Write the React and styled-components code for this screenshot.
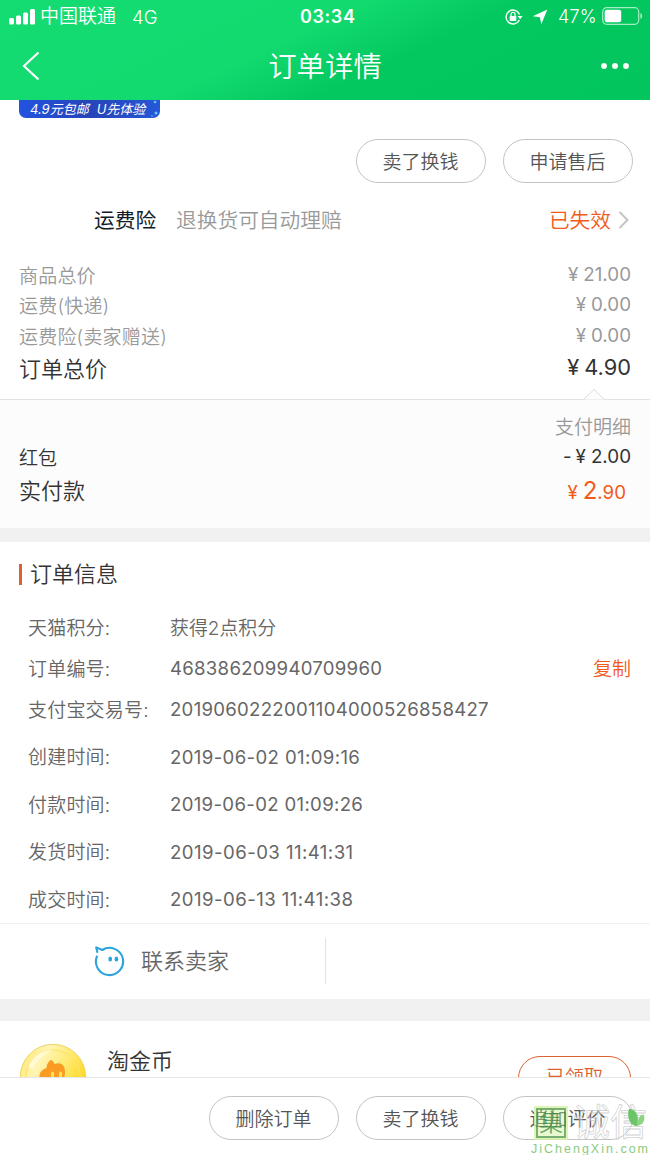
import React from "react";
import styled, { createGlobalStyle } from "styled-components";

const costs = [
    { label: "商品总价", price: "21.00", height: 31 },
    { label: "运费(快递)", price: "0.00", height: 30 },
    { label: "运费险(卖家赠送)", price: "0.00", height: 31 },
];

const infos = [
    { label: "天猫积分:", value: "获得2点积分", height: 41, spacing: 0, cjk: true },
    { label: "订单编号:", value: "468386209940709960", height: 41, spacing: 0.27, copy: true },
    { label: "支付宝交易号:", value: "2019060222001104000526858427", height: 41, spacing: 0.28 },
    { label: "创建时间:", value: "2019-06-02 01:09:16", height: 54, spacing: 0.37 },
    { label: "付款时间:", value: "2019-06-02 01:09:26", height: 41, spacing: 0.33 },
    { label: "发货时间:", value: "2019-06-03 11:41:31", height: 54, spacing: 0.45 },
    { label: "成交时间:", value: "2019-06-13 11:41:38", height: 41, spacing: 0.45 },
];

const StatusBar = () => (
    <Status>
        <SignalIcon width="27" height="16" viewBox="0 0 27 16" fill="#fff">
            <rect x="0" y="9" width="5" height="6.5" rx="1.5" />
            <rect x="7" y="6.5" width="5" height="9" rx="1.5" />
            <rect x="14" y="3.5" width="5" height="12" rx="1.5" />
            <rect x="21" y="0" width="5" height="15.5" rx="1.5" />
        </SignalIcon>
        <Carrier>中国联通</Carrier>
        <Network>4G</Network>
        <Clock>03:34</Clock>
        <svg width="18" height="16" viewBox="0 0 18 16" fill="none" stroke="#fff" strokeWidth="1.4">
            <path d="M14.6 5.5A7 7 0 1 0 14.4 11" />
            <path d="M12.6 7h5l-2.5 3.2z" fill="#fff" stroke="none" />
            <rect x="4.7" y="7" width="6.6" height="5" rx="0.6" fill="#fff" stroke="none" />
            <path d="M6 7V5.4a2 2 0 0 1 4 0V7" strokeWidth="1.2" />
        </svg>
        <LocationIcon width="16" height="16" viewBox="0 0 16 16" fill="#fff">
            <path d="M15.4 0.6 9.3 15.2 7.9 8.3 0.8 7.2z" />
        </LocationIcon>
        <Percent>47%</Percent>
        <BatteryIcon width="41" height="18" viewBox="0 0 41 18">
            <rect x="0.7" y="0.7" width="36" height="16.6" rx="4" fill="none" stroke="#a5edc4" strokeWidth="1.2" />
            <rect x="2.7" y="2.7" width="16.5" height="12.6" rx="2" fill="#fff" />
            <path d="M38.4 6v6c2.4-1 2.4-5 0-6z" fill="#a5edc4" />
        </BatteryIcon>
    </Status>
);

const CostRow = ({ label, price, height }) => (
    <Cost $height={height}>
        <CostLabel>{label}</CostLabel>
        <Price>
            <Yen>¥</Yen>
            {price}
        </Price>
    </Cost>
);

const InfoRow = ({ label, value, height, spacing, copy, cjk }) => (
    <Info $height={height}>
        <InfoLabel>{label}</InfoLabel>
        <InfoValue $cjk={cjk} $spacing={spacing}>
            {value}
        </InfoValue>
        {copy && <Copy>复制</Copy>}
    </Info>
);

const App = () => {
    return (
        <Page>
            <GlobalStyle />
            <Header>
                <StatusBar />
                <Nav>
                    <svg width="18" height="30" viewBox="0 0 18 30" fill="none" stroke="#fff" strokeWidth="2.2">
                        <path d="M16.5 1.5 2 15l14.5 13.5" />
                    </svg>
                    <NavTitle>订单详情</NavTitle>
                    <svg width="28" height="6" viewBox="0 0 28 6" fill="#fff">
                        <circle cx="3" cy="3" r="2.9" />
                        <circle cx="14" cy="3" r="2.9" />
                        <circle cx="25" cy="3" r="2.9" />
                    </svg>
                </Nav>
            </Header>

            <Goods>
                <Banner>
                    <span>4.9元包邮</span>
                    <span>U先体验</span>
                    <Sparkle width="8" height="18" viewBox="0 0 8 18" fill="#5fc4ff">
                        <circle cx="4" cy="2" r="1.3" />
                        <circle cx="5" cy="13" r="1.5" />
                        <circle cx="1" cy="16" r="0.8" />
                    </Sparkle>
                </Banner>
                <Actions>
                    <Pill>卖了换钱</Pill>
                    <Pill>申请售后</Pill>
                </Actions>
            </Goods>

            <Insurance>
                <InsuranceName>运费险</InsuranceName>
                <InsuranceDesc>退换货可自动理赔</InsuranceDesc>
                <Expired>已失效</Expired>
                <ArrowIcon width="12" height="20" viewBox="0 0 12 20" fill="none" stroke="#c4c4c4" strokeWidth="2">
                    <path d="M1.5 2 9.5 10l-8 8" />
                </ArrowIcon>
            </Insurance>

            <Costs>
                {costs.map((c) => (
                    <CostRow key={c.label} {...c} />
                ))}
                <Total>
                    <span>订单总价</span>
                    <TotalPrice>
                        <Yen>¥</Yen>
                        4.90
                    </TotalPrice>
                </Total>
            </Costs>

            <Payment>
                <Notch width="22" height="12" viewBox="0 0 22 12">
                    <path d="M1 11.5 11 1.5l10 10z" fill="#fcfcfc" />
                    <path d="M1 11 11 1.5l10 9.5" fill="none" stroke="#dcdcdc" />
                </Notch>
                <PayDetail>支付明细</PayDetail>
                <RedPacket>
                    <span>红包</span>
                    <Price>
                        <Minus>-</Minus>
                        <Yen>¥</Yen>
                        2.00
                    </Price>
                </RedPacket>
                <Paid>
                    <span>实付款</span>
                    <PaidPrice>
                        <Yen>¥</Yen>
                        <PaidBig>2</PaidBig>.90
                    </PaidPrice>
                </Paid>
            </Payment>
            <Divider $height={14} />

            <OrderInfo>
                <SectionTitle>订单信息</SectionTitle>
                {infos.map((i) => (
                    <InfoRow key={i.label} {...i} />
                ))}
            </OrderInfo>

            <Contact>
                <ContactSeller>
                    <svg width="32" height="32" viewBox="0 0 32 32" fill="none" stroke="#2ba3dc" strokeWidth="2.1" strokeLinejoin="round">
                        <path d="M3.2 10.7A13.6 13.6 0 1 0 8.2 5L2.2 2.4l1.3 5.4" />
                        <ellipse cx="16.2" cy="14" rx="1.9" ry="2.5" fill="#2ba3dc" stroke="none" />
                        <ellipse cx="22.4" cy="14" rx="1.9" ry="2.5" fill="#2ba3dc" stroke="none" />
                    </svg>
                    <span>联系卖家</span>
                </ContactSeller>
            </Contact>
            <Divider $height={22} />

            <CoinSection>
                <Coin width="68" height="68" viewBox="0 0 68 68">
                    <defs>
                        <linearGradient id="coin" x1="0" y1="0" x2="1" y2="0.5">
                            <stop offset="0" stopColor="#ffe35a" />
                            <stop offset="0.35" stopColor="#fff5b4" />
                            <stop offset="0.7" stopColor="#ffe96c" />
                            <stop offset="1" stopColor="#ffd822" />
                        </linearGradient>
                    </defs>
                    <circle cx="34" cy="34" r="32.7" fill="url(#coin)" stroke="#ecd468" />
                    <circle cx="34" cy="34" r="27" fill="none" stroke="#fbe272" strokeWidth="1.2" />
                    <path d="M9 24C14 12 24 7 33 7c-9 5-16 11-19 20z" fill="#fffad2" />
                    <path d="M20.5 34c0-5 2-7 7-9 0-3 1-5 4-8 2 0 3 2 4 4 3-1 5-1 7 0 4 3 4 8 3 13z" fill="#fa9c22" />
                    <path d="M32 34v-4q2-3 3 0v4zM40 34v-4q2-3 3 0v4z" fill="#ffe256" />
                </Coin>
                <CoinTitle>淘金币</CoinTitle>
                <Received>已领取</Received>
            </CoinSection>

            <Footer>
                <Pill>删除订单</Pill>
                <Pill>卖了换钱</Pill>
                <Pill>追加评价</Pill>
                <Watermark>
                    <WatermarkTop>
                        <WatermarkSeal>集</WatermarkSeal>
                        <WatermarkName>诚信</WatermarkName>
                        <Leaf width="20" height="30" viewBox="0 0 20 30">
                            <path d="M2 2c6 0 10 5 9 11 2-5 4-6 6-5 2 7-3 11-8 11C2 18 0 9 2 2z" fill="#8fd480" />
                            <path d="M2 2c6 0 9 5 8 17C2 18 0 9 2 2z" fill="#6cc468" />
                        </Leaf>
                    </WatermarkTop>
                    <WatermarkUrl>JiChengXin.com</WatermarkUrl>
                </Watermark>
            </Footer>
        </Page>
    );
};

const GlobalStyle = createGlobalStyle`
    body {
        margin: 0;
        background: #fff;
    }

    * {
        box-sizing: border-box;
    }

    svg {
        display: block;
        flex: none;
    }
`;

const Page = styled.div`
    width: 650px;
    height: 1155px;
    overflow: hidden;
    background: #fff;
    font-family: Inter, "Noto Sans CJK SC", sans-serif;
    font-weight: 350;
    font-size: 18.7px;
    line-height: 30px;
    color: #666;
    white-space: nowrap;
`;

const Header = styled.header`
    height: 100px;
    color: #fff;
    background: linear-gradient(155deg, #14dc72 0%, #12da6f 43%, #03c75f 61%, #02c55d 100%);
`;

const Status = styled.div`
    display: flex;
    align-items: center;
    height: 33px;
    padding-left: 9px;
`;

const SignalIcon = styled.svg`
    margin-right: 4px;
`;

const Carrier = styled.span`
    width: 92px;
    padding-top: 1px;
    font-size: 19px;
`;

const Network = styled.span`
    width: 168px;
    font-size: 18.5px;
`;

const Clock = styled.span`
    width: 205px;
    font-size: 18px;
    font-weight: 600;
    letter-spacing: 0.6px;
`;

const LocationIcon = styled.svg`
    margin-left: 9px;
`;

const Percent = styled.span`
    width: 44px;
    margin-left: 10px;
    font-size: 18px;
    letter-spacing: 0.2px;
`;

const BatteryIcon = styled.svg`
    margin-top: -1px;
`;

const Nav = styled.div`
    display: flex;
    align-items: center;
    justify-content: space-between;
    height: 66px;
    padding: 0 21px 0 22px;
`;

const NavTitle = styled.h1`
    margin: 2px 0 0 9px;
    font-size: 28.4px;
    font-weight: 350;
    line-height: 40px;
`;

const Goods = styled.section`
    height: 83px;
`;

const Banner = styled.div`
    position: relative;
    display: flex;
    gap: 8px;
    width: 141px;
    height: 18px;
    margin-left: 19px;
    padding-left: 11px;
    border-radius: 0 0 7px 7px;
    background: linear-gradient(90deg, #2253e0, #2744b8 50%, #2458d8);
    color: #fff;
    font-size: 13px;
    font-style: italic;
    font-weight: 400;
    line-height: 19px;
`;

const Sparkle = styled.svg`
    position: absolute;
    right: 1px;
    top: 0;
`;

const Actions = styled.div`
    display: flex;
    justify-content: flex-end;
    gap: 17px;
    padding: 21px 17px 0 0;
`;

const Pill = styled.button`
    width: 130px;
    height: 44px;
    padding: 3px 1px 0 0;
    border: 1px solid #c4c4c4;
    border-radius: 22px;
    background: #fff;
    color: #555;
    font: inherit;
    font-size: 19px;
`;

const Insurance = styled.section`
    display: flex;
    align-items: center;
    height: 74px;
    padding: 2px 20px 0 94px;
    font-size: 20.7px;
`;

const InsuranceName = styled.span`
    color: #111c28;
    font-weight: 400;
`;

const InsuranceDesc = styled.span`
    margin-left: 20px;
    color: #999;
`;

const Expired = styled.span`
    margin-left: auto;
    margin-right: 7px;
    color: #f25a1b;
`;

const ArrowIcon = styled.svg`
    margin-top: -2px;
`;

const Costs = styled.section`
    height: 142px;
    padding: 4px 19px 0;
`;

const Cost = styled.div`
    display: flex;
    align-items: center;
    justify-content: space-between;
    height: ${(props) => props.$height}px;
    color: #999;
    font-size: 19px;
`;

const CostLabel = styled.span`
    letter-spacing: 0.2px;
`;

const Price = styled.span`
    margin-top: -4px;
    font-size: 18.8px;
    font-weight: 400;
`;

const Yen = styled.span`
    margin-right: 5px;
`;

const Total = styled(Cost).attrs({ $height: 32 })`
    color: #333;
    font-size: 22px;
`;

const TotalPrice = styled(Price)`
    font-size: 21.8px;
`;

const Payment = styled.section`
    position: relative;
    height: 129px;
    padding: 13px 19px 0;
    border-top: 1px solid #e2e2e2;
    background: #fcfcfc;
`;

const Notch = styled.svg`
    position: absolute;
    top: -12px;
    right: 45px;
`;

const PayDetail = styled.div`
    color: #999;
    font-size: 19px;
    text-align: right;
`;

const RedPacket = styled(Cost).attrs({ $height: 31 })`
    color: #333;
`;

const Minus = styled.span`
    margin-right: 4px;
`;

const Paid = styled(Cost).attrs({ $height: 33 })`
    color: #333;
    font-size: 22px;
`;

const PaidPrice = styled.span`
    margin-top: 2px;
    margin-right: 5px;
    color: #f25a1b;
    font-size: 18.7px;
    font-weight: 400;
`;

const PaidBig = styled.span`
    font-size: 24px;
`;

const Divider = styled.div`
    height: ${(props) => props.$height}px;
    background: #f1f1f1;
`;

const OrderInfo = styled.section`
    height: 382px;
    padding: 16px 19px 0;
    border-bottom: 1px solid #f0f0f0;
`;

const SectionTitle = styled.h2`
    display: flex;
    align-items: center;
    height: 32px;
    margin: 0 0 18px;
    color: #333;
    font-size: 22px;
    font-weight: 350;

    &::before {
        content: "";
        width: 3px;
        height: 21px;
        margin-right: 8px;
        background: #dc6230;
    }
`;

const Info = styled.div`
    display: flex;
    align-items: center;
    height: ${(props) => props.$height}px;
    padding-left: 9px;
    font-size: 19px;
`;

const InfoLabel = styled.span`
    width: 142px;
    letter-spacing: 0.2px;
`;

const InfoValue = styled.span`
    margin-top: ${(props) => (props.$cjk ? "0" : "-3px")};
    font-size: ${(props) => (props.$cjk ? "18.9px" : "18.6px")};
    font-weight: ${(props) => (props.$cjk ? 350 : 400)};
    letter-spacing: ${(props) => props.$spacing}px;
`;

const Copy = styled.span`
    margin-left: auto;
    color: #f25a1b;
`;

const Contact = styled.section`
    display: flex;
    align-items: center;
    height: 75px;
    padding-bottom: 1px;
`;

const ContactSeller = styled.div`
    display: flex;
    align-items: center;
    gap: 15px;
    width: 326px;
    height: 46px;
    padding-left: 94px;
    border-right: 1px solid #e2e2e2;
    font-size: 22px;
`;

const CoinSection = styled.section`
    display: flex;
    align-items: flex-start;
    height: 56px;
    padding: 0 19px;
    overflow: hidden;
`;

const Coin = styled.svg`
    margin-top: 22px;
`;

const CoinTitle = styled.span`
    margin: 24px 0 0 20px;
    color: #333;
    font-size: 22px;
    line-height: 32px;
`;

const Received = styled.button`
    width: 113px;
    height: 44px;
    margin: 35px 0 0 auto;
    padding: 0;
    border: 1px solid #dc6230;
    border-radius: 22px;
    background: #fff;
    color: #dc6230;
    font: inherit;
    font-size: 19px;
`;

const Footer = styled.footer`
    position: relative;
    display: flex;
    justify-content: flex-end;
    gap: 17px;
    height: 78px;
    padding: 18px 17px 0 0;
    border-top: 1px solid #e6e6e6;
    background: #fff;
`;

const Watermark = styled.div`
    position: absolute;
    left: 531px;
    top: 28px;
    width: 119px;
    line-height: 1;
`;

const WatermarkTop = styled.div`
    display: flex;
    align-items: center;
    gap: 7px;
    height: 33px;
    padding-left: 5px;
`;

const WatermarkSeal = styled.span`
    width: 30px;
    height: 30px;
    border: 2px solid rgba(60, 135, 65, 0.65);
    outline: 2px solid rgba(215, 242, 165, 0.8);
    background: rgba(200, 240, 140, 0.4);
    color: rgba(60, 135, 65, 0.75);
    font-size: 24px;
    line-height: 25px;
    text-align: center;
`;

const WatermarkName = styled.span`
    color: rgba(255, 255, 255, 0.4);
    font-size: 37px;
    font-weight: 400;
    line-height: 33px;
    -webkit-text-stroke: 0.8px rgba(190, 190, 190, 0.7);
`;

const Leaf = styled.svg`
    position: absolute;
    left: 96px;
    top: 1px;
`;

const WatermarkUrl = styled.div`
    margin-top: 3px;
    color: #8dca7e;
    font-family: "Liberation Sans", sans-serif;
    font-size: 12.5px;
    font-weight: 400;
    letter-spacing: 2px;
    line-height: 15px;
`;

export default App;
